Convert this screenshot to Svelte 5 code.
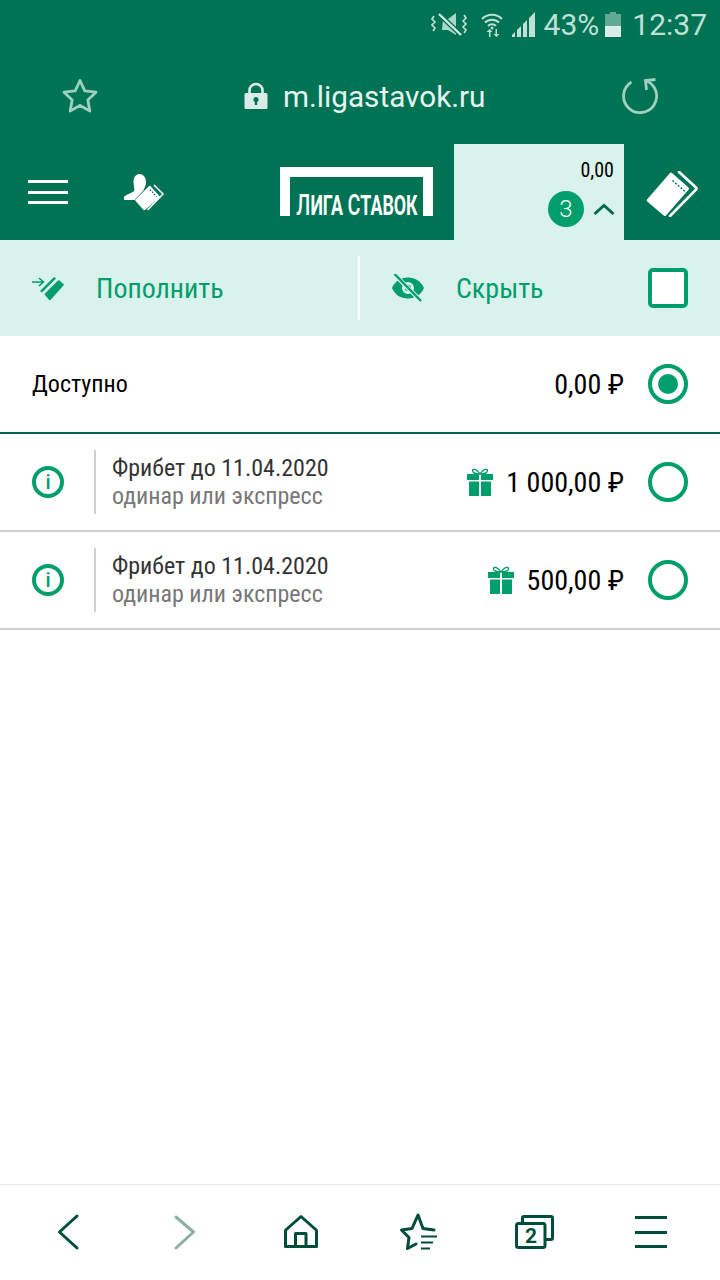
<script>
  const freebets = [
    { title: 'Фрибет до 11.04.2020', note: 'одинар или экспресс', amount: '1 000,00 ₽' },
    { title: 'Фрибет до 11.04.2020', note: 'одинар или экспресс', amount: '500,00 ₽' }
  ]
</script>

<div class="page">
  <div class="status">
    <svg class="st-mute" width="36" height="28" viewBox="0 0 36 28">
      <path d="M12 9h5l8-6v22l-8-5h-6z" fill="#bfe0d6" opacity=".9"/>
      <path d="M8 4l22 21" stroke="#007355" stroke-width="5"/>
      <path d="M8 4l22 21" stroke="#d5ebe5" stroke-width="2.4"/>
      <path d="M3 6l-2 3 3 3-3 3 3 3-2 3M33 5l2 3-3 3 3 3-3 3 3 3-2 3" fill="none" stroke="#bfe0d6" stroke-width="1.6"/>
    </svg>
    <svg class="st-wifi" width="22" height="26" viewBox="0 0 22 26">
      <path d="M1 8a14 14 0 0 1 20 0M4 11.500a10 10 0 0 1 14 0M7 15a5.500 5.500 0 0 1 8 0" fill="none" stroke="#bfe0d6" stroke-width="2"/>
      <circle cx="11" cy="17" r="1.500" fill="#bfe0d6"/>
      <path d="M7 26v-5H4.500L7.500 18l3 3H8.500v5zM15 18v5h2.500l-3 3-3-3h2v-5z" fill="#bfe0d6" transform="translate(1 0)"/>
    </svg>
    <svg class="st-signal" width="24" height="26" viewBox="0 0 24 26">
      <path d="M0 26v-2l3-3v5zM5 26v-7l4-4v11zM11 26V13l4-4v17zM17 26V7l6-6v25z" fill="#bfe0d6"/>
    </svg>
    <span class="st-pct">43%</span>
    <svg class="st-batt" width="16" height="25" viewBox="0 0 16 25">
      <path d="M5 0h6v2h5v23H0V2h5z" fill="#bfe0d6" opacity=".5"/>
      <rect y="14" width="16" height="11" fill="#d9ece7"/>
    </svg>
    <span class="st-time">12:37</span>
  </div>

  <div class="urlbar">
    <svg width="36" height="36" viewBox="0 0 36 36">
      <path d="M18 2.500l4.800 10.300 11.200 1.400-8.200 7.700 2.100 11.100-9.900-5.500-9.900 5.500 2.100-11.100L2 14.200l11.200-1.400z" fill="none" stroke="#9fcfc1" stroke-width="2.800" stroke-linejoin="round"/>
    </svg>
    <div class="address">
      <svg width="24" height="28" viewBox="0 0 24 28">
        <path d="M5.500 13V8.500a6.500 6.500 0 0 1 13 0V13" fill="none" stroke="#d9ece7" stroke-width="2.600"/>
        <path fill-rule="evenodd" d="M2 11h20a1.500 1.500 0 0 1 1.500 1.500v13A1.500 1.500 0 0 1 22 27H2A1.500 1.500 0 0 1 .5 25.500v-13A1.500 1.500 0 0 1 2 11zm10 4a2.600 2.600 0 0 0-1.200 4.900V23h2.400v-3.100A2.600 2.600 0 0 0 12 15z" fill="#d9ece7"/>
      </svg>
      <span>m.ligastavok.ru</span>
    </div>
    <svg class="reload" width="36" height="38" viewBox="0 0 36 38">
      <path d="M9.500 6A16.500 16.500 0 1 0 23.500 4.500M33.500 3.500L23.500 4.500 24.500 14" fill="none" stroke="#9fcfc1" stroke-width="2.800"/>
    </svg>
  </div>

  <div class="header">
    <div class="burger"><i></i><i></i><i></i></div>
    <svg class="person" width="41" height="37" viewBox="0 0 41 37">
      <path d="M9.500 8C9.500 3 12 0 15.500 0S22 3 22 8c0 4-2 7-3 9l-8.500 9H0v-3c1-2 8-4 10-6 1-2-.5-5-.5-9z" fill="#fff"/>
      <path d="M11.500 25.500L25 12a1 1 0 0 1 1.400 0l9 10a1 1 0 0 1 0 1.400L21 36a1 1 0 0 1-1.400 0l-8-9a1 1 0 0 1-.1-1.500z" fill="#fff"/>
      <path d="M26 15.500l6.500 7" stroke="#007355" stroke-width="1.200" stroke-dasharray="1.500 1.500"/>
      <path d="M30 11l9 9-15.500 16" fill="none" stroke="#fff" stroke-width="1.600"/>
    </svg>
    <div class="logo"><span><b>Л</b>ИГА <b>С</b>ТАВОК</span></div>
    <div class="balance">
      <span class="sum cond">0,00</span>
      <div class="count">
        <span class="badge">3</span>
        <svg width="22" height="12" viewBox="0 0 22 12">
          <path d="M1.500 11L11 2.500 20.500 11" fill="none" stroke="#00694f" stroke-width="2.800"/>
        </svg>
      </div>
    </div>
    <svg class="ticket" width="52" height="46" viewBox="0 0 52 46">
      <path d="M1 28.500L24 2a1.500 1.500 0 0 1 2 0l16.500 14.500a1.500 1.500 0 0 1 .2 2L20 44.500a1.500 1.500 0 0 1-2 .2L1.200 30.500a1.500 1.500 0 0 1-.2-2z" fill="#fff"/>
      <path d="M26.500 9.500l12.500 11" stroke="#007355" stroke-width="1.400" stroke-dasharray="2 1.600"/>
      <path d="M33 1l17 15.500a1.500 1.500 0 0 1 .2 2L24 45" fill="none" stroke="#fff" stroke-width="2.600" stroke-linecap="round"/>
    </svg>
  </div>

  <div class="actions">
    <div class="action first">
      <svg width="32" height="26" viewBox="0 0 32 26">
        <path d="M0 7h11M7 3l4.500 4L7 11" fill="none" stroke="#009e6b" stroke-width="1.600"/>
        <path d="M8 16L22 2l2 1.500L10 17.500z" fill="#009e6b"/>
        <path d="M13 18.500L26 5.500a1 1 0 0 1 1.400 0l4 3.500a1 1 0 0 1 0 1.400L18.500 25a1 1 0 0 1-1.400 0L13 20a1 1 0 0 1 0-1.500z" fill="#009e6b"/>
      </svg>
      <span class="cond">Пополнить</span>
    </div>
    <div class="action second">
      <svg width="32" height="28" viewBox="0 0 32 28">
        <path fill-rule="evenodd" d="M0 14C3 7 9 3.500 16 3.500S29 7 32 14c-3 7-9 10.500-16 10.500S3 21 0 14zm16-6a6 6 0 1 0 0 12 6 6 0 0 0 0-12z" fill="#009e6b"/>
        <circle cx="16" cy="14" r="3" fill="#009e6b"/>
        <path d="M3 1l26 26" stroke="#d9f2eb" stroke-width="4.500"/>
        <path d="M2.500 0l26.500 27" stroke="#009e6b" stroke-width="2.400"/>
      </svg>
      <span class="cond">Скрыть</span>
    </div>
    <div class="checkbox"></div>
  </div>

  <div class="row main">
    <span class="label cond">Доступно</span>
    <span class="amount cond">0,00 ₽</span>
    <span class="radio on"></span>
  </div>

  {#each freebets as bet}
    <div class="row bet">
      <span class="info">i</span>
      <div class="text">
        <span class="title cond">{bet.title}</span>
        <span class="note cond">{bet.note}</span>
      </div>
      <svg class="gift" width="26" height="28" viewBox="0 0 26 28">
        <path d="M13 6C10 1 6 .500 5.500 2.500S8 6 13 6c5 0 8-1.500 7.500-3.500S16 1 13 6z" fill="none" stroke="#009e6b" stroke-width="1.400"/>
        <path d="M0 6h12v6H0zM14 6h12v6H14zM2 13.500h10V28H2zM14 13.500h10V28H14z" fill="#009e6b"/>
      </svg>
      <span class="amount cond">{bet.amount}</span>
      <span class="radio"></span>
    </div>
  {/each}

  <div class="spacer"></div>

  <div class="nav">
    <svg viewBox="0 0 120 96"><path d="M77 32L59.500 48 77 64" class="ln"/></svg>
    <svg viewBox="0 0 120 96"><path d="M56 33l17.500 15L56 64" class="ln off"/></svg>
    <svg viewBox="0 0 120 96">
      <path d="M45.500 62.500V47a2 2 0 0 1 .8-1.500L61 32.500l14.700 13a2 2 0 0 1 .8 1.500v15.500z" class="ln"/>
      <path d="M55.500 62.500V49.500h10.500v13" class="ln"/>
    </svg>
    <svg viewBox="0 0 120 96">
      <path d="M56 60l-8.500 4.500 1.500-11-7.500-7.500 10.500-1.500L58 31l5 13.500 11 1.500" class="ln"/>
      <path d="M61 52.500h16M61 58.500h12M61 64.500h9" class="ln thin"/>
    </svg>
    <svg viewBox="0 0 120 96">
      <path d="M42.500 38v-4a1.500 1.500 0 0 1 1.500-1.500h27a1.500 1.500 0 0 1 1.500 1.500v20a1.500 1.500 0 0 1-1.500 1.500h-5" class="ln"/>
      <rect x="36.500" y="39.500" width="28.500" height="24" rx="2" class="ln"/>
      <text x="51" y="59" class="tab-num">2</text>
    </svg>
    <svg viewBox="0 0 120 96"><path d="M35 33.500h32M35 48.500h32M35 62.500h32" class="ln wide"/></svg>
  </div>
</div>

<style>
  :global(body) {
    margin: 0;
    background: #fff;
  }

  .page {
    width: 720px;
    height: 1280px;
    display: flex;
    flex-direction: column;
    font-family: Roboto, "Noto Sans", sans-serif;
    color: #000;
    overflow: hidden;
  }

  .cond {
    font-stretch: 87%;
  }

  .status {
    height: 48px;
    flex: none;
    background: #007355;
    color: #bfe0d6;
    display: flex;
    align-items: center;
    justify-content: flex-end;
    padding: 0 13px 0 0;
    box-sizing: border-box;
    font-size: 30px;
  }

  .st-mute { margin-right: 14px; }
  .st-wifi { margin-right: 9px; }
  .st-signal { margin-right: 8px; }
  .st-pct { margin-right: 6px; }
  .st-batt { margin-right: 11px; }

  .urlbar {
    height: 96px;
    flex: none;
    background: #007355;
    display: flex;
    align-items: center;
    padding-left: 62px;
    box-sizing: border-box;
  }

  .address {
    display: flex;
    align-items: center;
    gap: 15px;
    margin-left: 146px;
    color: #e6f4f0;
    font-size: 29.7px;
  }

  .reload {
    margin: -2px 0 0 137px;
  }

  .header {
    height: 96px;
    flex: none;
    background: #007355;
    display: flex;
    align-items: flex-start;
    padding-left: 28px;
    box-sizing: border-box;
  }

  .burger {
    width: 40px;
    height: 24px;
    margin: 36px 56px 0 0;
    display: flex;
    flex-direction: column;
    justify-content: space-between;
  }

  .burger i {
    height: 3px;
    background: #fff;
  }

  .person {
    margin: 30px 115px 0 0;
  }

  .logo {
    width: 153px;
    height: 49px;
    margin: 23px 21px 0 0;
    border: 10px solid #fff;
    border-bottom: 0;
    box-sizing: border-box;
    position: relative;
    flex: none;
  }

  .logo span {
    position: absolute;
    left: 50%;
    bottom: -4px;
    transform: translateX(-50%) scaleX(.66);
    white-space: nowrap;
    color: #fff;
    font-weight: 700;
    font-size: 27px;
    line-height: 28px;
  }

  .logo b {
    font-size: 30px;
    font-weight: 500;
  }

  .balance {
    width: 170px;
    height: 96px;
    flex: none;
    background: #d9f2eb;
    box-sizing: border-box;
    padding: 14px 10px 0 0;
    display: flex;
    flex-direction: column;
    align-items: flex-end;
  }

  .sum {
    font-size: 20px;
    line-height: 24px;
  }

  .count {
    display: flex;
    align-items: center;
    gap: 9px;
    margin: 9px -1px 0 0;
  }

  .badge {
    width: 36px;
    height: 36px;
    border-radius: 50%;
    background: #009e6b;
    color: #fff;
    font-size: 24px;
    font-weight: 300;
    display: flex;
    align-items: center;
    justify-content: center;
  }

  .ticket {
    margin: 27px 0 0 22px;
    flex: none;
  }

  .actions {
    height: 96px;
    flex: none;
    background: #d9f2eb;
    display: flex;
    align-items: center;
    position: relative;
    color: #009e6b;
    font-size: 28px;
  }

  .action {
    display: flex;
    align-items: center;
    gap: 32px;
    padding-left: 32px;
    box-sizing: border-box;
  }

  .first {
    width: 360px;
  }

  .first::after {
    content: '';
    position: absolute;
    left: 358px;
    top: 16px;
    height: 64px;
    width: 2px;
    background: #fff;
  }

  .second {
    width: 288px;
  }

  .checkbox {
    width: 40px;
    height: 40px;
    box-sizing: border-box;
    border: 4px solid #009e6b;
    border-radius: 5px;
    background: #fff;
  }

  .row {
    height: 98px;
    flex: none;
    box-sizing: border-box;
    display: flex;
    align-items: center;
    padding: 0 32px;
    border-bottom: 2px solid #cfcfcf;
  }

  .main {
    border-bottom-color: #00694f;
  }

  .label {
    font-size: 24px;
    margin-right: auto;
  }

  .amount {
    font-size: 28px;
    margin-right: 24px;
  }

  .radio {
    width: 40px;
    height: 40px;
    box-sizing: border-box;
    border-radius: 50%;
    border: 4px solid #009e6b;
    display: flex;
    align-items: center;
    justify-content: center;
  }

  .radio.on::before {
    content: '';
    width: 20px;
    height: 20px;
    border-radius: 50%;
    background: #009e6b;
  }

  .info {
    width: 32px;
    height: 32px;
    box-sizing: border-box;
    border-radius: 50%;
    border: 4px solid #009e6b;
    color: #009e6b;
    font-size: 20px;
    font-weight: 500;
    display: flex;
    align-items: center;
    justify-content: center;
    margin-right: 30px;
  }

  .text {
    height: 64px;
    box-sizing: border-box;
    border-left: 2px solid #cfcfcf;
    padding-left: 16px;
    margin-right: auto;
    display: flex;
    flex-direction: column;
    justify-content: center;
    font-size: 24px;
    line-height: 28px;
    color: #333;
  }

  .note {
    color: #777;
  }

  .gift {
    margin-right: 13px;
  }

  .spacer {
    flex: 1;
  }

  .nav {
    height: 96px;
    flex: none;
    box-sizing: border-box;
    border-top: 1px solid #e6e6e6;
    display: grid;
    grid-template-columns: repeat(6, 120px);
  }

  .nav svg {
    width: 120px;
    height: 96px;
    margin-top: -1px;
    display: block;
  }

  .ln {
    fill: none;
    stroke: #004d3a;
    stroke-width: 3;
    stroke-linecap: round;
    stroke-linejoin: round;
  }

  .off {
    stroke: #8cb0a4;
  }

  .thin {
    stroke-width: 2;
    stroke-linecap: butt;
  }

  .wide {
    stroke-linecap: butt;
  }

  .tab-num {
    fill: #004d3a;
    font-size: 21px;
    font-weight: 700;
    text-anchor: middle;
  }
</style>
